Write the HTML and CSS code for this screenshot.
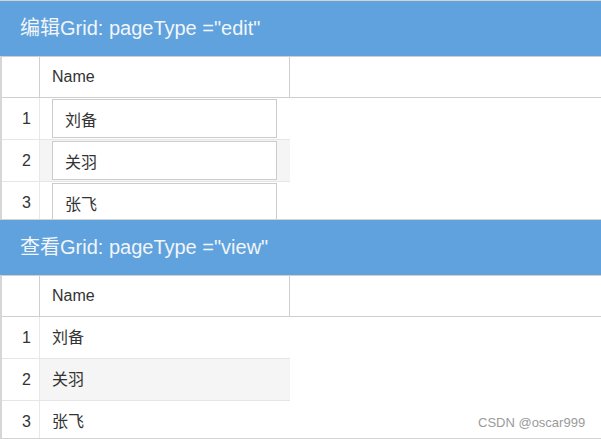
FILE: index.html
```html
<!DOCTYPE html>
<html lang="zh-CN">
<head>
<meta charset="utf-8">
<title>Grid pageType</title>
<link rel="stylesheet" href="styles.css">
</head>
<body>
<div class="page">
  <section class="panel">
    <div class="panel-title">编辑Grid: pageType ="edit"</div>
    <div class="grid">
      <div class="grid-head">
        <div class="hcell num"></div>
        <div class="hcell name">Name</div>
      </div>
      <div class="row">
        <div class="cell num">1</div>
        <div class="cell name edit"><input class="cell-input" type="text" value="刘备"></div>
      </div>
      <div class="row alt">
        <div class="cell num">2</div>
        <div class="cell name edit"><input class="cell-input" type="text" value="关羽"></div>
      </div>
      <div class="row">
        <div class="cell num">3</div>
        <div class="cell name edit"><input class="cell-input" type="text" value="张飞"></div>
      </div>
    </div>
  </section>
  <section class="panel last">
    <div class="panel-title">查看Grid: pageType ="view"</div>
    <div class="grid">
      <div class="grid-head">
        <div class="hcell num"></div>
        <div class="hcell name">Name</div>
      </div>
      <div class="row">
        <div class="cell num">1</div>
        <div class="cell name">刘备</div>
      </div>
      <div class="row alt">
        <div class="cell num">2</div>
        <div class="cell name">关羽</div>
      </div>
      <div class="row">
        <div class="cell num">3</div>
        <div class="cell name">张飞</div>
      </div>
    </div>
  </section>
  <div class="watermark">CSDN @oscar999</div>
</div>
</body>
</html>
```
FILE: styles.css
```css
* {
  box-sizing: border-box;
}

html, body {
  margin: 0;
  padding: 0;
  background: #ffffff;
}

body {
  font-family: "Liberation Sans", Arial, "Noto Sans CJK SC", sans-serif;
  color: #333333;
  width: 601px;
  height: 439px;
  overflow: hidden;
}

.page {
  position: relative;
  width: 601px;
}

.panel {
  height: 219px;
  border-top: 1px solid #d3d3d3;
  overflow: hidden;
}

.panel.last {
  height: 220px;
  border-bottom: 1px solid #d3d3d3;
}

.panel-title {
  height: 55px;
  line-height: 55px;
  padding-left: 20px;
  background: #5fa2dd;
  color: #f2f5f9;
  font-size: 20px;
  white-space: nowrap;
}

.grid {
  border-top: 1px solid #cfcfcf;
  border-left: 2px solid #d6d6d6;
}

.grid-head {
  display: flex;
  height: 41px;
  border-bottom: 1px solid #cfcfcf;
}

.hcell {
  height: 40px;
  line-height: 40px;
  font-size: 16px;
  border-right: 1px solid #cfcfcf;
}

.hcell.num {
  width: 38px;
}

.hcell.name {
  width: 250px;
  padding-left: 12px;
}

.row {
  display: flex;
  width: 288px;
  height: 42px;
  border-bottom: 1px solid #e6e6e6;
}

.cell {
  height: 41px;
  line-height: 41px;
  font-size: 16px;
}

.cell.num {
  width: 38px;
  text-align: right;
  padding-right: 8px;
  border-right: 1px solid #e8e8e8;
}

.cell.name {
  width: 250px;
  padding-left: 12px;
}

.row.alt .cell.name {
  background: #f5f5f5;
}

.cell.name.edit {
  padding-top: 1px;
}

.cell-input {
  display: block;
  width: 225px;
  height: 39px;
  margin: 0;
  padding: 0 0 0 12px;
  border: 1px solid #cccccc;
  background: #ffffff;
  font-family: "Liberation Sans", Arial, "Noto Sans CJK SC", sans-serif;
  font-size: 16px;
  color: #333333;
  outline: none;
}

.watermark {
  position: absolute;
  left: 478px;
  top: 415px;
  font-size: 13px;
  line-height: 15px;
  color: #9a9a9a;
  white-space: nowrap;
}
```
